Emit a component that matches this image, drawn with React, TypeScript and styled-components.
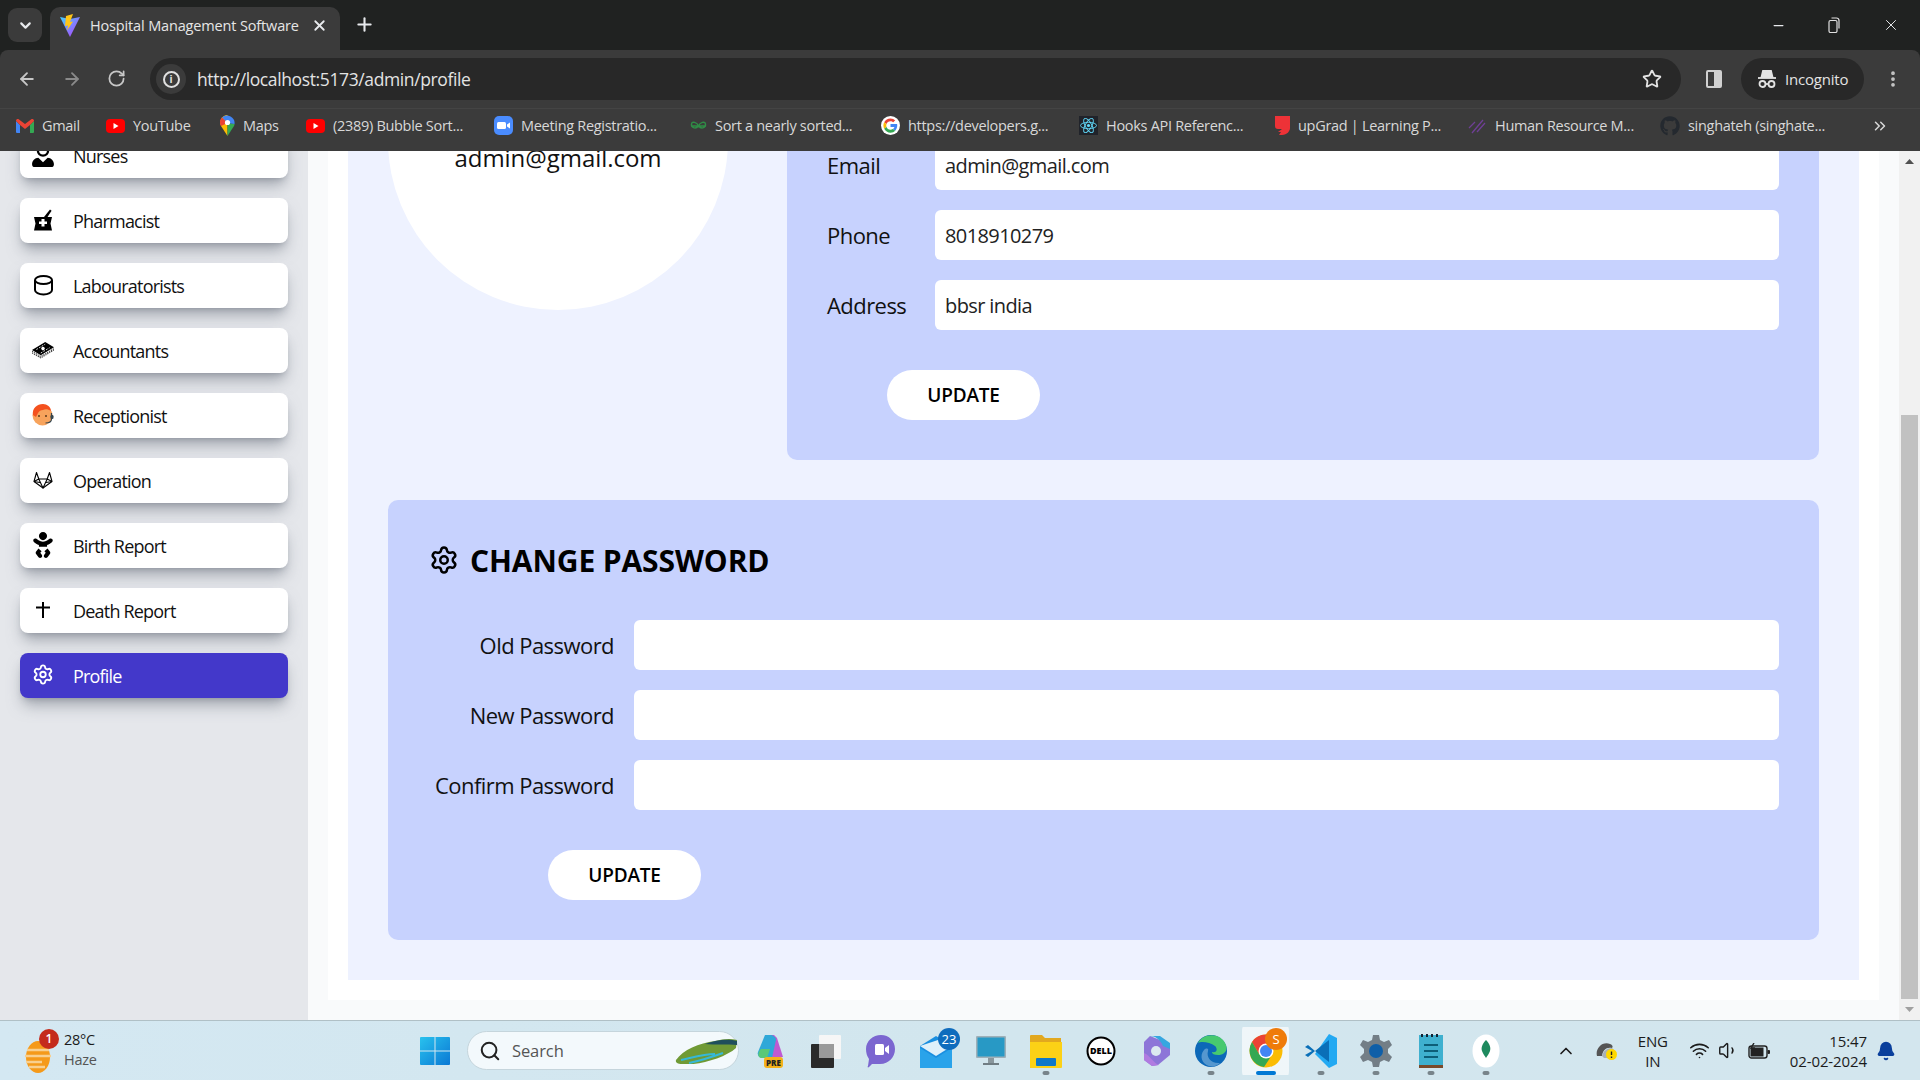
import React from "react";
import styled, { createGlobalStyle } from "styled-components";
import { ArrowLeft, ArrowRight, RotateCw, Star, ChevronDown, ChevronUp, Plus, X, Minus, Settings, Search, Wifi, Volume1, ChevronsRight, EllipsisVertical, Bell } from "lucide-react";
import { FaUserNurse, FaBaby, FaGithub } from "react-icons/fa";

const FONT = `"Open Sans", "Noto Sans", "Liberation Sans", sans-serif`;

const Global = createGlobalStyle`
  html, body { margin: 0; height: 100%; overflow: hidden; background: #202221; }
  * { box-sizing: border-box; }
  body { font-family: ${FONT}; }
`;

const Shell = styled.div`display: flex; flex-direction: column; height: 100vh; width: 100vw;`;

/* ---------- browser chrome ---------- */
const TabStrip = styled.div`height: 50px; flex: none; background: #202221; display: flex; align-items: flex-end; padding-left: 8px; color: #e8eaed;`;
const TabMenu = styled.div`width: 34px; height: 34px; margin-bottom: 8px; border-radius: 9px; background: #3b3b3b; display: flex; align-items: center; justify-content: center;`;
const Tab = styled.div`width: 290px; height: 43px; margin-left: 8px; padding: 0 12px 6px 10px; background: #3b3b3b; border-radius: 10px 10px 0 0; display: flex; align-items: center; gap: 10px;`;
const TabTitle = styled.span`font-size: 14.5px; letter-spacing: -0.15px; flex: 1; white-space: nowrap; color: #e6e6e6;`;
const NewTab = styled.div`margin: 0 0 15px 14px; display: flex;`;
const WinControls = styled.div`margin-left: auto; height: 50px; display: flex; align-items: center; padding-right: 20px; gap: 42px;`;

const Toolbar = styled.div`height: 58px; flex: none; background: #3b3b3b; border-radius: 8px 8px 0 0; display: flex; align-items: center; padding: 8px 0 8px 17px; color: #c7c7c7;`;
const NavIcons = styled.div`display: flex; gap: 25px; width: 133px;`;
const UrlBar = styled.div`width: 1531px; height: 42px; border-radius: 21px; background: #282828; display: flex; align-items: center; padding: 0 19px 0 6px;`;
const InfoBtn = styled.div`width: 30px; height: 30px; border-radius: 50%; background: #3b3b3b; display: flex; align-items: center; justify-content: center; margin-right: 11px;`;
const InfoGlyph = styled.div`width: 17px; height: 17px; border-radius: 50%; border: 2px solid #e0e0e0; color: #e0e0e0; font: 700 11px/13px "Liberation Sans", sans-serif; text-align: center;`;
const UrlText = styled.span`font-size: 17.5px; letter-spacing: -0.38px; color: #e3e3e3; flex: 1;`;
const SidePanelGlyph = styled.div`width: 16px; height: 18px; margin-left: 25px; border: 2px solid #d0d0d0; border-right-width: 8px; border-radius: 2px; flex: none;`;
const IncognitoPill = styled.div`margin-left: 19px; width: 123px; height: 42px; border-radius: 21px; background: #282828; display: flex; align-items: center; padding-left: 16px; gap: 8px; color: #e3e3e3; font-size: 15px; letter-spacing: -0.2px; flex: none;`;
const MoreBtn = styled.div`margin-left: 19px; display: flex;`;

const Bookmarks = styled.div`height: 43px; flex: none; background: #3b3b3b; border-top: 1px solid #444; display: flex; align-items: center; padding: 0 0 9px 16px; color: #d8d8d8;`;
const Bookmark = styled.div<{ $w: number }>`width: ${p => p.$w}px; flex: none; display: flex; align-items: center; gap: 8px; font-size: 14.5px; letter-spacing: -0.3px; white-space: nowrap; overflow: hidden;`;
const BookmarkMore = styled.div`margin-left: 41px; display: flex;`;

/* ---------- page ---------- */
const Viewport = styled.div`flex: 1; min-height: 0; display: flex; background: #f9fafb;`;
const Sidebar = styled.aside`width: 308px; flex: none; background: #e5e7eb; overflow: hidden; display: flex; flex-direction: column; justify-content: flex-end; gap: 20px; padding: 0 20px 322px;`;
const NavItem = styled.div<{ $active?: boolean }>`
  height: 45px; flex: none; border-radius: 8px; display: flex; align-items: center; padding: 0 0 0 12px; gap: 19px;
  font-size: 18px; letter-spacing: -0.8px;
  background: ${p => (p.$active ? "#4338ca" : "#fff")};
  color: ${p => (p.$active ? "#fff" : "#111")};
  box-shadow: 0 10px 15px -3px rgba(107, 114, 128, 0.55), 0 4px 6px -4px rgba(107, 114, 128, 0.55);
`;
const NavIcon = styled.span`width: 22px; height: 24px; margin-bottom: 2px; flex: none; display: flex; align-items: center; justify-content: center;`;

const Main = styled.main`flex: 1; min-width: 0; overflow: hidden; display: flex; flex-direction: column; justify-content: flex-end; padding: 0 20px 20px;`;
const WhiteCard = styled.div`flex: none; background: #fff; padding: 0 20px 20px;`;
const Panel = styled.div`background: #eef2ff; padding: 0 40px 40px; display: flex; flex-direction: column; gap: 40px;`;
const TopRow = styled.div`display: flex; align-items: flex-start; gap: 59px;`;
const AvatarCircle = styled.div`flex: none; width: 340px; height: 340px; border-radius: 50%; background: #fff; padding-top: 170px; text-align: center; font-size: 24px; line-height: 36px; letter-spacing: -0.05px; color: #111;`;
const FormCard = styled.section`flex: 1; min-width: 0; background: #c7d2fe; border-radius: 0 0 10px 10px; padding: 170px 40px 40px 40px; display: flex; flex-direction: column; gap: 20px;`;
const PasswordCard = styled.section`background: #c7d2fe; border-radius: 10px; padding: 40px; display: flex; flex-direction: column; gap: 20px;`;
const CardTitle = styled.h2`margin: 0 0 20px 1px; height: 40px; display: flex; align-items: center; gap: 11px; font-size: 30px; font-weight: 700; letter-spacing: -0.1px; color: #000;`;
const Row = styled.div<{ $label: number }>`display: grid; grid-template-columns: ${p => p.$label}px 1fr; align-items: center; column-gap: ${p => (p.$label > 150 ? 20 : 0)}px;`;
const Label = styled.label<{ $right?: boolean }>`font-size: 22px; letter-spacing: -0.55px; color: #111; text-align: ${p => (p.$right ? "right" : "left")}; white-space: nowrap;`;
const Field = styled.div`height: 50px; background: #fff; border-radius: 6px; padding: 0 10px; display: flex; align-items: center; font-size: 20px; letter-spacing: -0.6px; color: #222;`;
const UpdateBtn = styled.div<{ $offset: number }>`width: 153px; height: 50px; margin: 20px 0 0 ${p => p.$offset}px; border-radius: 25px; background: #fff; display: flex; align-items: center; justify-content: center; font-size: 19px; font-weight: 600; letter-spacing: -0.2px; color: #000;`;

const ScrollBar = styled.div`width: 21px; flex: none; background: #f1f1f1; display: flex; flex-direction: column;`;
const ScrollArrow = styled.div`height: 21px; flex: none; display: flex; align-items: center; justify-content: center;`;
const ScrollSpace = styled.div`flex: 1;`;
const ScrollThumb = styled.div`height: 584px; flex: none; width: 17px; margin: 0 2px; background: #c1c1c1;`;

/* ---------- taskbar ---------- */
const Taskbar = styled.footer`height: 60px; flex: none; background: linear-gradient(90deg, #d4e8f2 0%, #d2e6ee 50%, #d3e6ee 100%); border-top: 1px solid #b0c0c6; display: flex; align-items: center; color: #1b1b1b;`;
const Weather = styled.div`width: 420px; flex: none; display: flex; align-items: center; padding-left: 24px; gap: 10px;`;
const WeatherIcon = styled.div`width: 30px; height: 44px; position: relative; flex: none; display: flex; align-items: flex-end;`;
const WeatherBadge = styled.span`position: absolute; left: 15px; top: 0; width: 20px; height: 20px; border-radius: 50%; background: #c42b1c; color: #fff; font-size: 12px; line-height: 20px; text-align: center; font-weight: 600;`;
const WeatherText = styled.div`font-size: 14.5px; line-height: 20px; letter-spacing: -0.3px; margin-top: -2px;`;
const WeatherSub = styled.div`color: #555; `;
const StartBtn = styled.div`width: 47px; flex: none; display: flex;`;
const SearchBox = styled.div`width: 272px; height: 39px; flex: none; border-radius: 20px; background: #f3f9fc; border: 1px solid #c5d5dc; display: flex; align-items: center; padding-left: 11px; gap: 11px; font-size: 16.5px; letter-spacing: -0.1px; color: #555;`;
const SearchArt = styled.span`margin-left: auto; display: flex;`;
const Apps = styled.div`display: flex; margin-left: 4px;`;
const AppSlot = styled.div<{ $active?: boolean }>`width: 55px; height: 48px; padding: 0 4px; background-clip: content-box; flex: none; display: flex; align-items: center; justify-content: center; position: relative; border-radius: 5px; background-color: ${p => (p.$active ? "rgba(255,255,255,.65)" : "transparent")};`;
const AppDot = styled.span<{ $active?: boolean }>`position: absolute; bottom: 0; left: 50%; transform: translateX(-50%); height: 4px; border-radius: 2px; width: ${p => (p.$active ? 20 : 7)}px; background: ${p => (p.$active ? "#0078d4" : "#78848a")};`;
const AppBadge = styled.span<{ $bg: string; $right: number }>`position: absolute; top: 1px; right: ${p => p.$right}px; min-width: 22px; height: 22px; padding: 0 3px; border-radius: 11px; background: ${p => p.$bg}; color: #fff; font-size: 13px; line-height: 22px; text-align: center;`;
const Tray = styled.div`margin-left: auto; display: flex; align-items: center; padding-right: 24px;`;
const TrayIcon = styled.span<{ $gap: number }>`display: flex; margin-left: ${p => p.$gap}px;`;
const Lang = styled.div`margin-left: 20px; font-size: 15px; line-height: 20px; text-align: center; letter-spacing: -0.2px;`;
const Clock = styled.div`margin-left: 20px; font-size: 15px; line-height: 20px; text-align: right; letter-spacing: -0.1px;`;

/* ---------- drawings ---------- */
const ViteIcon = () => (
  <svg width="20" height="24" viewBox="0 0 20 24">
    <defs><linearGradient id="vg" x1="0" y1="0" x2="1" y2="1"><stop offset="0" stopColor="#41d1ff" /><stop offset="1" stopColor="#bd34fe" /></linearGradient></defs>
    <path d="M0 3l10 2 10-2-10 20z" fill="url(#vg)" />
    <path d="M13 0L6 2 5 12l3-.5-1 5 6-9-3 .5z" fill="#ffc517" />
  </svg>
);
const RestoreIcon = () => (
  <svg width="12" height="16" viewBox="0 0 12 16" fill="none" stroke="#e0e0e0" strokeWidth="1.200"><rect x="1" y="3.500" width="8" height="12" rx="1.500" /><path d="M3.500 1h5a2.500 2.500 0 012.500 2.500v8" /></svg>
);
const GmailIcon = () => (
  <svg width="18" height="14" viewBox="0 0 18 14"><path d="M0 2v11a1 1 0 001 1h3V6z" fill="#4285f4" /><path d="M18 2v11a1 1 0 01-1 1h-3V6z" fill="#34a853" /><path d="M0 2c0-2 2-2.500 3-1.500L9 5l6-4.500C16-.5 18 0 18 2l-4 4-5 4-5-4z" fill="#ea4335" /></svg>
);
const YtIcon = () => (
  <svg width="19" height="14" viewBox="0 0 19 14"><rect width="19" height="14" rx="4" fill="#f00" /><path d="M7.500 4v6l5-3z" fill="#fff" /></svg>
);
const MapsIcon = () => (
  <svg width="15" height="21" viewBox="0 0 15 21"><path d="M7.500 0A7.500 7.500 0 001 11l6.500 10z" fill="#fbbc04" /><path d="M7.500 21L14 11a7.500 7.500 0 00.6-2L7.500 8z" fill="#34a853" /><path d="M2 2.500L7.500 8l7 1A7.500 7.500 0 002 2.500z" fill="#4285f4" /><path d="M2 2.500A7.500 7.500 0 001 11l6.500-3z" fill="#ea4335" /><circle cx="7.500" cy="7.500" r="2.600" fill="#fff" /></svg>
);
const ZoomIcon = () => (
  <svg width="19" height="19" viewBox="0 0 19 19"><rect width="19" height="19" rx="5" fill="#4a8cff" /><rect x="3" y="6" width="9" height="7" rx="1.500" fill="#fff" /><path d="M13 8.500l3-2v6l-3-2z" fill="#fff" /></svg>
);
const GfgIcon = () => (
  <svg width="17" height="10" viewBox="0 0 17 10" fill="none" stroke="#2f8d46" strokeWidth="1.400"><path d="M1 5h15M8.500 5C7 1 2 0 1.500 3S5 9 8.500 5c3.500 4 7.500 1 7-2S10 1 8.500 5z" /></svg>
);
const GoogleIcon = () => (
  <svg width="19" height="19" viewBox="0 0 48 48"><circle cx="24" cy="24" r="24" fill="#fff" /><path fill="#ea4335" d="M24 13c3 0 5 1 7 3l5-5c-3-3-7-5-12-5C17 6 11 10 8 16l6 4c1-4 5-7 10-7z" /><path fill="#4285f4" d="M41 24c0-1 0-3-.4-4H24v8h10c-.5 2-2 4-4 5l6 4c3-3 5-8 5-13z" /><path fill="#fbbc05" d="M14 28c-.5-1-.7-3-.7-4s.2-3 .7-4l-6-4c-1 2-2 5-2 8s1 6 2 8z" /><path fill="#34a853" d="M24 42c5 0 9-2 12-5l-6-4c-2 1-4 2-6 2-5 0-9-3-10-7l-6 4c3 6 9 10 16 10z" /></svg>
);
const ReactIcon = () => (
  <svg width="19" height="19" viewBox="0 0 19 19"><rect width="19" height="19" fill="#20232a" /><g fill="none" stroke="#61dafb" strokeWidth=".9"><ellipse cx="9.500" cy="9.500" rx="8" ry="3.200" /><ellipse cx="9.500" cy="9.500" rx="8" ry="3.200" transform="rotate(60 9.500 9.500)" /><ellipse cx="9.500" cy="9.500" rx="8" ry="3.200" transform="rotate(120 9.500 9.500)" /></g><circle cx="9.500" cy="9.500" r="1.600" fill="#61dafb" /></svg>
);
const UpgradIcon = () => (
  <svg width="15" height="19" viewBox="0 0 15 19"><path d="M0 0h15v12c0 3-3 7-8 7H4l2-3H3l4-3H3a3 3 0 01-3-3z" fill="#ed3237" /></svg>
);
const HrIcon = () => (
  <svg width="20" height="17" viewBox="0 0 20 17" fill="none" stroke="#6f3f96" strokeWidth="1.300"><path d="M2 11l6-6M5 16L16 3M10 15l8-9" /></svg>
);
const IncognitoIcon = () => (
  <svg width="20" height="20" viewBox="0 0 20 20" fill="none" stroke="#e3e3e3" strokeWidth="1.800"><path d="M6 2h8l1.500 6h-11z" fill="#e3e3e3" /><path d="M1 9h18" /><circle cx="5.500" cy="15" r="3" /><circle cx="14.500" cy="15" r="3" /><path d="M8.500 15h3" /></svg>
);
const PharmacyIcon = () => (
  <svg width="20" height="22" viewBox="0 0 20 22"><path d="M1 8h18l-1.500 6.500L19 21.500H1l1.500-7z" fill="#000" /><path d="M11 8L17 .5l1.600 1.200L14.500 8z" fill="#000" /><path d="M8.500 10h3v2.500H14v2.600h-2.500v2.400h-3v-2.400H6v-2.600h2.500z" fill="#fff" /></svg>
);
const LabIcon = () => (
  <svg width="21" height="22" viewBox="0 0 21 22" fill="none" stroke="#000" strokeWidth="2"><ellipse cx="10.500" cy="6" rx="8.500" ry="4" /><path d="M2 6v10c0 2.500 3.800 4.500 8.500 4.500S19 18.500 19 16V6" /></svg>
);
const CashIcon = () => (
  <svg width="25" height="19" viewBox="0 0 25 19"><path d="M0 10L15 1l10 6-15 9z" fill="#000" /><path d="M5 9.500L15 3.500M10 13.500l10-6" stroke="#fff" strokeWidth="1" strokeDasharray="2 1.500" /><circle cx="12.500" cy="8.500" r="2" fill="#fff" /><path d="M0 11.500l10 6 15-9M0 13.500l10 5.500 15-9" fill="none" stroke="#444" strokeWidth="1.200" strokeDasharray="1.500 1" /></svg>
);
const ReceptionIcon = () => (
  <svg width="22" height="22" viewBox="0 0 22 22"><circle cx="10.500" cy="11.500" r="10" fill="#f7a35c" /><path d="M1 11C0 4 5 0 11 0c4 0 8 3 8 7-3-2-6-2-8-1-2 0-4 1-5 3l-2 4z" fill="#f4511e" /><circle cx="7" cy="12" r="1" fill="#5d3a1a" /><circle cx="14" cy="12" r="1" fill="#5d3a1a" /><path d="M19.500 9v6c0 3-3 4-6 4" fill="none" stroke="#37474f" strokeWidth="1.200" /><rect x="18.500" y="11" width="3" height="4" rx="1.200" fill="#37474f" /></svg>
);
const OperationIcon = () => (
  <svg width="20" height="18" viewBox="0 0 20 18" fill="none" stroke="#000" strokeWidth="1.100" strokeLinejoin="round"><path d="M10 17L1 10.500 3.500 1.500 5.800 8h8.400l2.300-6.500 2.500 9z" /><path d="M5.800 8L10 17l4.200-9M1 10.500L5.800 8M19 10.500L14.200 8M1 10.500l6 1M19 10.500l-6 1" /></svg>
);
const CrossIcon = () => (
  <svg width="14" height="16" viewBox="0 0 14 16" stroke="#000" strokeWidth="2"><path d="M7 0v16M0 5.500h14" /></svg>
);
const WeatherArt = () => (
  <svg width="28" height="32" viewBox="0 0 28 32"><ellipse cx="14" cy="16" rx="12" ry="16" fill="#f59a1a" /><path d="M3 9h22M1 15h26M2 21h16M5 26h16" stroke="#f8d090" strokeWidth="2.400" /></svg>
);
const WinLogo = () => (
  <svg width="30" height="30" viewBox="0 0 30 30"><defs><linearGradient id="wl" x1="0" y1="0" x2="1" y2="1"><stop offset="0" stopColor="#29c2ee" /><stop offset="1" stopColor="#0a78d4" /></linearGradient></defs><path d="M1 1h13.500v13.500H0V2a1 1 0 011-1zM15.500 1H29a1 1 0 011 1v12.500H15.500zM0 15.500h14.500V29H1a1 1 0 01-1-1zM15.500 15.500H30V28a1 1 0 01-1 1H15.500z" fill="url(#wl)" /></svg>
);
const SearchScene = () => (
  <svg width="63" height="26" viewBox="0 0 63 26"><path d="M1 22C8 12 24 5 40 3c8-2 15-3 22-1l-1 8C50 20 22 28 8 26 4 26 0 25 1 22z" fill="#6f9a35" /><path d="M30 6c8-3 22-6 32-3v4c-10-1-22 0-32-1z" fill="#1f4f5c" /><path d="M6 22c10-2 22-6 34-6M14 25c10-2 20-5 34-10" stroke="#35b8d8" strokeWidth="2" fill="none" /></svg>
);
const CopilotIcon = () => (
  <svg width="30" height="34" viewBox="0 0 30 34"><path d="M9 1h9l3 3 6 19H15z" fill="#c05ad0" /><path d="M9 1L2 18c-1 3 1 6 4 6h10L20 6c0-3-3-5-6-5z" fill="#2fa8d8" /><path d="M5 15h9l-3 9H5c-3 0-4-5 0-9z" fill="#5ac878" /><rect x="8" y="23" width="19" height="11" rx="3" fill="#f5b21a" /><text x="17.500" y="32" fontSize="8" fontWeight="800" fontFamily="Open Sans" textAnchor="middle" fill="#222">PRE</text></svg>
);
const TerminalIcon = () => (
  <svg width="30" height="34" viewBox="0 0 30 34"><rect x="8" y="1" width="22" height="24" rx="1" fill="#f6f6f6" /><rect x="8" y="10" width="15" height="14" fill="#b5b5b5" /><rect x="0" y="10" width="23" height="24" rx="1" fill="#2a2a2a" /><rect x="8" y="10" width="15" height="14" fill="#9a9a9a" /></svg>
);
const TeamsIcon = () => (
  <svg width="30" height="34" viewBox="0 0 30 34"><path d="M15 1c8 0 14 6 14 14s-6 15-15 15H6l-3 3c-1 1-2 0-1-1l1-7C1 22 0 19 0 15 0 7 7 1 15 1z" fill="#7b66d0" /><rect x="9" y="10" width="9" height="11" rx="1.500" fill="#fff" /><path d="M19 14l4-3v9l-4-3z" fill="#fff" /></svg>
);
const MailIcon = () => (
  <svg width="32" height="34" viewBox="0 0 32 34"><path d="M0 12L16 2l16 10v22H0z" fill="#1a8fe0" /><path d="M0 12l16 10 16-10-14-6z" fill="#dff0fa" /><path d="M0 34V14l16 10 16-10v20z" fill="#2aa3ea" /></svg>
);
const MonitorIcon = () => (
  <svg width="30" height="32" viewBox="0 0 30 32"><rect y="1" width="30" height="22" rx="1" fill="#9fb0b8" /><rect x="1.500" y="2.500" width="27" height="19" fill="#2899c5" /><rect x="12" y="23" width="6" height="5" fill="#8a979d" /><rect x="7" y="28" width="16" height="2" fill="#707d83" /></svg>
);
const FolderIcon = () => (
  <svg width="32" height="36" viewBox="0 0 32 36"><path d="M1 2h11l3 3h16v29a1 1 0 01-1 1H1a1 1 0 01-1-1V3a1 1 0 011-1z" fill="#e2a81f" /><path d="M0 9h32v25a1 1 0 01-1 1H1a1 1 0 01-1-1z" fill="#fcd116" /><rect x="6" y="25" width="20" height="8" rx="1" fill="#0f78c8" /></svg>
);
const DellIcon = () => (
  <svg width="30" height="30" viewBox="0 0 30 30"><circle cx="15" cy="15" r="13.500" fill="#fff" stroke="#000" strokeWidth="2" /><text x="15" y="18" fontSize="9" fontWeight="800" fontFamily="Open Sans" textAnchor="middle" fill="#000">DELL</text></svg>
);
const BingIcon = () => (
  <svg width="28" height="32" viewBox="0 0 28 32"><path d="M8 1l10 4 10 8v7l-12 10-6 1-8-6V7z" fill="#8d75d8" /><path d="M8 1c5 0 10 3 13 10l7 3V8l-10-7z" fill="#36a6e0" /><path d="M2 18c6 2 9 10 15 12l-7 1-8-6z" fill="#b07be0" /><circle cx="14" cy="16" r="5" fill="#dce9f0" /></svg>
);
const EdgeIcon = () => (
  <svg width="32" height="32" viewBox="0 0 32 32"><circle cx="16" cy="16" r="16" fill="#0c68b8" /><path d="M3 8C8-2 26-3 31 10c2 6-2 10-8 10-4 0-6-1-6-3 5 1 6-3 3-6C15 7 6 6 3 8z" fill="#47c96f" /><path d="M13 16c-2 6 3 13 12 12-3 3-7 4-11 3C7 29 4 21 9 15c2-2 5-2 4 1z" fill="#dff0fa" opacity=".35" /></svg>
);
const ChromeIcon = () => (
  <svg width="34" height="34" viewBox="0 0 34 34"><circle cx="17" cy="17" r="16.500" fill="#fbbc04" /><path d="M17 .5A16.500 16.500 0 003 8l7 12 7-8h15A16.500 16.500 0 0017 .5z" fill="#ea4335" /><path d="M3 8a16.500 16.500 0 0012 25l6-9-11-4z" fill="#34a853" /><circle cx="17" cy="17" r="7.500" fill="#fff" /><circle cx="17" cy="17" r="6" fill="#4285f4" /></svg>
);
const VsIcon = () => (
  <svg width="32" height="34" viewBox="0 0 32 34"><path d="M24 0l8 4v26l-8 4-14-14z" fill="#23a9f2" /><path d="M24 6L10 17 3 11 0 13l7 4-7 4 3 2 7-6 14 11z" fill="#0a6fb8" /></svg>
);
const GearIcon = () => (
  <svg width="32" height="32" viewBox="0 0 32 32"><path d="M13 0h6l1 5 4 2 5-2 3 5-4 4v4l4 4-3 5-5-2-4 2-1 5h-6l-1-5-4-2-5 2-3-5 4-4v-4L0 10l3-5 5 2 4-2z" fill="#737e86" /><circle cx="16" cy="16" r="7" fill="#0f5fa8" /></svg>
);
const NotesIcon = () => (
  <svg width="24" height="36" viewBox="0 0 24 36"><rect y="2" width="24" height="31" fill="#3fb0cf" /><rect y="32" width="24" height="3" fill="#7a4a2a" /><path d="M5 12h14M5 18h14M5 24h14" stroke="#0d5e78" strokeWidth="2" /><path d="M3 1v3M8 1v3M13 1v3M18 1v3" stroke="#123" strokeWidth="2" /></svg>
);
const MongoIcon = () => (
  <svg width="28" height="34" viewBox="0 0 28 34"><ellipse cx="14" cy="17" rx="13.500" ry="16.500" fill="#fff" /><path d="M14 6c4 4 5 8 4 11-1 3-3 5-4 7-1-2-3-4-4-7-1-3 0-7 4-11z" fill="#1e8a5e" /></svg>
);
const CloudWarn = () => (
  <svg width="22" height="20" viewBox="0 0 22 20"><path d="M1 15C-1 8 6 0 14 3c3 1 3 3 2 4-6-1-9 2-10 8z" fill="#555" /><path d="M6 15c1-5 5-8 10-8l3 3-5 7H8z" fill="#aab1b5" /><circle cx="15.500" cy="13.500" r="5.500" fill="#ffd800" /><path d="M15.500 10.500v3.500M15.500 15.500v1.500" stroke="#222" strokeWidth="1.400" /></svg>
);
const BatteryIcon = () => (
  <svg width="22" height="16" viewBox="0 0 22 16"><rect x="1" y="3" width="18" height="12" rx="2.500" fill="none" stroke="#222" strokeWidth="1.400" /><rect x="2.500" y="4.500" width="13" height="9" fill="#222" /><rect x="19.500" y="7" width="2.500" height="4" rx="1" fill="#222" /><path d="M6 0L3 5h3L4 9" fill="none" stroke="#222" strokeWidth="1.400" /></svg>
);

const BOOKMARKS: [React.ReactNode, string, number][] = [
  [<GmailIcon />, "Gmail", 90],
  [<YtIcon />, "YouTube", 114],
  [<MapsIcon />, "Maps", 86],
  [<YtIcon />, "(2389) Bubble Sort...", 188],
  [<ZoomIcon />, "Meeting Registratio...", 196],
  [<GfgIcon />, "Sort a nearly sorted...", 191],
  [<GoogleIcon />, "https://developers.g...", 198],
  [<ReactIcon />, "Hooks API Referenc...", 196],
  [<UpgradIcon />, "upGrad | Learning P...", 192],
  [<HrIcon />, "Human Resource M...", 193],
  [<FaGithub size={20} color="#24292f" />, "singhateh (singhate...", 170],
];

const NAV: [React.ReactNode, string][] = [
  [<FaUserNurse size={25} color="#000" />, "Nurses"],
  [<PharmacyIcon />, "Pharmacist"],
  [<LabIcon />, "Labouratorists"],
  [<CashIcon />, "Accountants"],
  [<ReceptionIcon />, "Receptionist"],
  [<OperationIcon />, "Operation"],
  [<FaBaby size={26} color="#000" />, "Birth Report"],
  [<CrossIcon />, "Death Report"],
];

const APPS: { icon: React.ReactNode; dot?: boolean; active?: boolean; badge?: [string, string, number] }[] = [
  { icon: <CopilotIcon /> },
  { icon: <TerminalIcon /> },
  { icon: <TeamsIcon /> },
  { icon: <MailIcon />, badge: ["23", "#0f6cbd", 3] },
  { icon: <MonitorIcon /> },
  { icon: <FolderIcon />, dot: true },
  { icon: <DellIcon /> },
  { icon: <BingIcon /> },
  { icon: <EdgeIcon />, dot: true },
  { icon: <ChromeIcon />, active: true, dot: true, badge: ["S", "#ef7b0a", 6] },
  { icon: <VsIcon />, dot: true },
  { icon: <GearIcon />, dot: true },
  { icon: <NotesIcon />, dot: true },
  { icon: <MongoIcon />, dot: true },
];

export default function App() {
  return (
    <Shell>
      <Global />
      <TabStrip>
        <TabMenu><ChevronDown size={17} strokeWidth={3} /></TabMenu>
        <Tab>
          <ViteIcon />
          <TabTitle>Hospital Management Software</TabTitle>
          <X size={17} strokeWidth={2.5} />
        </Tab>
        <NewTab><Plus size={21} strokeWidth={2.4} /></NewTab>
        <WinControls>
          <Minus size={15} />
          <RestoreIcon />
          <X size={18} strokeWidth={1.3} />
        </WinControls>
      </TabStrip>
      <Toolbar>
        <NavIcons>
          <ArrowLeft size={20} strokeWidth={2.2} />
          <ArrowRight size={20} strokeWidth={2.2} color="#8a8a8a" />
          <RotateCw size={19} strokeWidth={2.2} />
        </NavIcons>
        <UrlBar>
          <InfoBtn><InfoGlyph>i</InfoGlyph></InfoBtn>
          <UrlText>http://localhost:5173/admin/profile</UrlText>
          <Star size={20} strokeWidth={2.2} color="#e3e3e3" />
        </UrlBar>
        <SidePanelGlyph />
        <IncognitoPill><IncognitoIcon />Incognito</IncognitoPill>
        <MoreBtn><EllipsisVertical size={20} strokeWidth={2.5} /></MoreBtn>
      </Toolbar>
      <Bookmarks>
        {BOOKMARKS.map(([icon, label, w]) => (
          <Bookmark key={label} $w={w}>{icon}<span>{label}</span></Bookmark>
        ))}
        <BookmarkMore><ChevronsRight size={18} /></BookmarkMore>
      </Bookmarks>

      <Viewport>
        <Sidebar>
          {NAV.map(([icon, label]) => (
            <NavItem key={label}><NavIcon>{icon}</NavIcon>{label}</NavItem>
          ))}
          <NavItem $active><NavIcon><Settings size={25} strokeWidth={2} /></NavIcon>Profile</NavItem>
        </Sidebar>
        <Main>
          <WhiteCard>
            <Panel>
              <TopRow>
                <AvatarCircle>admin@gmail.com</AvatarCircle>
                <FormCard>
                  <Row $label={108}><Label>Email</Label><Field>admin@gmail.com</Field></Row>
                  <Row $label={108}><Label>Phone</Label><Field>8018910279</Field></Row>
                  <Row $label={108}><Label>Address</Label><Field>bbsr india</Field></Row>
                  <UpdateBtn $offset={60}>UPDATE</UpdateBtn>
                </FormCard>
              </TopRow>
              <PasswordCard>
                <CardTitle><Settings size={30} strokeWidth={2} />CHANGE PASSWORD</CardTitle>
                <Row $label={186}><Label $right>Old Password</Label><Field /></Row>
                <Row $label={186}><Label $right>New Password</Label><Field /></Row>
                <Row $label={186}><Label $right>Confirm Password</Label><Field /></Row>
                <UpdateBtn $offset={120}>UPDATE</UpdateBtn>
              </PasswordCard>
            </Panel>
          </WhiteCard>
        </Main>
        <ScrollBar>
          <ScrollArrow><svg width="9" height="5"><path d="M4.500 0L9 5H0z" fill="#505050" /></svg></ScrollArrow>
          <ScrollSpace />
          <ScrollThumb />
          <ScrollArrow><svg width="9" height="5"><path d="M0 0h9L4.500 5z" fill="#a0a0a0" /></svg></ScrollArrow>
        </ScrollBar>
      </Viewport>

      <Taskbar>
        <Weather>
          <WeatherIcon><WeatherArt /><WeatherBadge>1</WeatherBadge></WeatherIcon>
          <WeatherText>28°C<WeatherSub>Haze</WeatherSub></WeatherText>
        </Weather>
        <StartBtn><WinLogo /></StartBtn>
        <SearchBox>
          <Search size={22} strokeWidth={2.2} color="#222" />Search
          <SearchArt><SearchScene /></SearchArt>
        </SearchBox>
        <Apps>
          {APPS.map((a, i) => (
            <AppSlot key={i} $active={a.active}>
              {a.icon}
              {a.badge && <AppBadge $bg={a.badge[1]} $right={a.badge[2]}>{a.badge[0]}</AppBadge>}
              {a.dot && <AppDot $active={a.active} />}
            </AppSlot>
          ))}
        </Apps>
        <Tray>
          <ChevronUp size={20} strokeWidth={2} />
          <TrayIcon $gap={20}><CloudWarn /></TrayIcon>
          <Lang>ENG<br />IN</Lang>
          <TrayIcon $gap={21}><Wifi size={21} strokeWidth={1.8} /></TrayIcon>
          <TrayIcon $gap={8}><Volume1 size={21} strokeWidth={1.6} /></TrayIcon>
          <TrayIcon $gap={9}><BatteryIcon /></TrayIcon>
          <Clock>15:47<br />02-02-2024</Clock>
          <TrayIcon $gap={9}><Bell size={20} fill="#0a3f9c" color="#0a3f9c" /></TrayIcon>
        </Tray>
      </Taskbar>
    </Shell>
  );
}
